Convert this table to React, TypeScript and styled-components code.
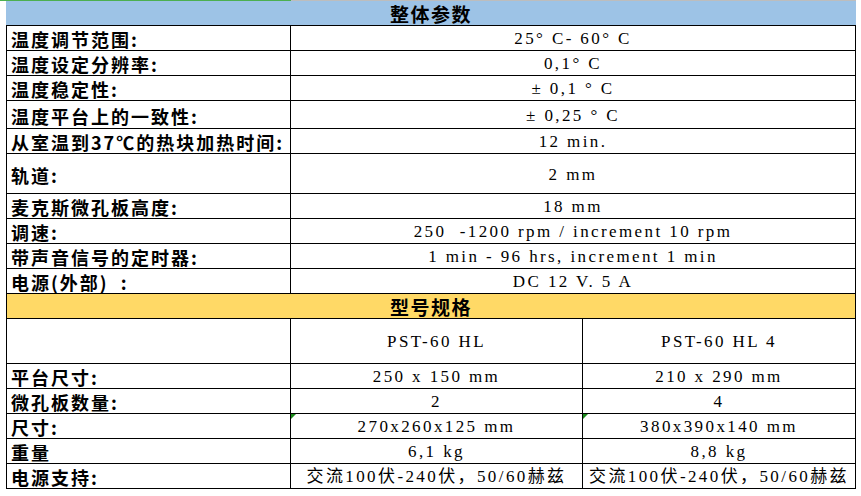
import React from "react";
import styled, { createGlobalStyle } from "styled-components";

const GlobalStyle = createGlobalStyle`
  html, body {
    margin: 0;
    padding: 0;
    background: #ffffff;
  }
`;

type Spec = { label: string; value: string; h: number };
type Model = { label: string; a: string; b: string; h: number; flag?: boolean };

const general: Spec[] = [
  { label: "温度调节范围:", value: "25° C- 60° C", h: 25 },
  { label: "温度设定分辨率:", value: "0,1° C", h: 25 },
  { label: "温度稳定性:", value: "± 0,1 ° C", h: 25 },
  { label: "温度平台上的一致性:", value: "± 0,25 ° C", h: 28 },
  { label: "从室温到37℃的热块加热时间:", value: "12 min.", h: 25 },
  { label: "轨道:", value: "2 mm", h: 40 },
  { label: "麦克斯微孔板高度:", value: "18 mm", h: 25 },
  { label: "调速:", value: "250  -1200 rpm / increment 10 rpm", h: 25 },
  { label: "带声音信号的定时器:", value: "1 min - 96 hrs, increment 1 min", h: 25 },
  { label: "电源(外部)  :", value: "DC 12 V. 5 A", h: 25 },
];

const models: Model[] = [
  { label: "", a: "PST-60 HL", b: "PST-60 HL 4", h: 45 },
  { label: "平台尺寸:", a: "250 x 150 mm", b: "210 x 290 mm", h: 25 },
  { label: "微孔板数量:", a: "2", b: "4", h: 25 },
  { label: "尺寸:", a: "270x260x125 mm", b: "380x390x140 mm", h: 25, flag: true },
  { label: "重量", a: "6,1 kg", b: "8,8 kg", h: 25 },
  { label: "电源支持:", a: "交流100伏-240伏，50/60赫兹", b: "交流100伏-240伏，50/60赫兹", h: 25 },
];

export default function App() {
  return (
    <Page>
      <GlobalStyle />
      <TopStrip>
        <StripPart $color="#4caf50" $w={291} />
        <StripPart $color="#bdbdbd" $w={565} />
      </TopStrip>
      <Sheet>
        <SectionHeader $tone="#9dc3e6">整体参数</SectionHeader>
        {general.map((r) => (
          <Row key={r.label} $h={r.h} $cols="284px 1fr">
            <Label>{r.label}</Label>
            <Value>{r.value}</Value>
          </Row>
        ))}
        <SectionHeader $tone="#ffd966" $boxed>
          型号规格
        </SectionHeader>
        {models.map((r, i) => (
          <Row key={i} $h={r.h} $cols="284px 292px 1fr">
            <Label>{r.label}</Label>
            <Value $flag={r.flag}>{r.a}</Value>
            <Value $flag={r.flag}>{r.b}</Value>
          </Row>
        ))}
      </Sheet>
    </Page>
  );
}

const Page = styled.div`
  width: 861px;
  height: 496px;
  background: #ffffff;
  overflow: hidden;
`;

const TopStrip = styled.div`
  display: flex;
  height: 1px;
`;

const StripPart = styled.div<{ $color: string; $w: number }>`
  width: ${(p) => p.$w}px;
  background: ${(p) => p.$color};
`;

const Sheet = styled.div`
  margin-left: 6px;
  width: 850px;
  display: flex;
  flex-direction: column;
`;

const SectionHeader = styled.div<{ $tone: string; $boxed?: boolean }>`
  box-sizing: border-box;
  height: 25px;
  background: ${(p) => p.$tone};
  border-bottom: 1px solid #000;
  border-left: ${(p) => (p.$boxed ? "1px solid #000" : "none")};
  border-right: ${(p) => (p.$boxed ? "1px solid #000" : "none")};
  display: flex;
  align-items: center;
  justify-content: center;
  padding-top: 1px;
  font-family: "Noto Sans CJK SC", sans-serif;
  font-weight: 700;
  font-size: 19px;
  line-height: 21px;
  letter-spacing: 1.5px;
  color: #000;
`;

const Row = styled.div<{ $h: number; $cols: string }>`
  box-sizing: border-box;
  height: ${(p) => p.$h}px;
  display: grid;
  grid-template-columns: ${(p) => p.$cols};
  border-left: 1px solid #000;
  border-bottom: 1px solid #000;
`;

const Cell = styled.div`
  position: relative;
  box-sizing: border-box;
  border-right: 1px solid #000;
  display: flex;
  align-items: center;
  padding-top: 2px;
  white-space: pre;
  line-height: 20px;
  color: #000;
`;

const Label = styled(Cell)`
  padding-left: 4px;
  font-family: "Noto Sans CJK SC", sans-serif;
  font-weight: 700;
  font-size: 18px;
  letter-spacing: 2px;
`;

const Value = styled(Cell)<{ $flag?: boolean }>`
  justify-content: center;
  font-family: "Liberation Serif", "Noto Sans CJK SC", serif;
  font-size: 17px;
  letter-spacing: 2.4px;

  &::before {
    content: "";
    display: ${(p) => (p.$flag ? "block" : "none")};
    position: absolute;
    left: 0;
    top: 0;
    width: 0;
    height: 0;
    border-top: 5px solid #1a8a1a;
    border-right: 5px solid transparent;
  }
`;
